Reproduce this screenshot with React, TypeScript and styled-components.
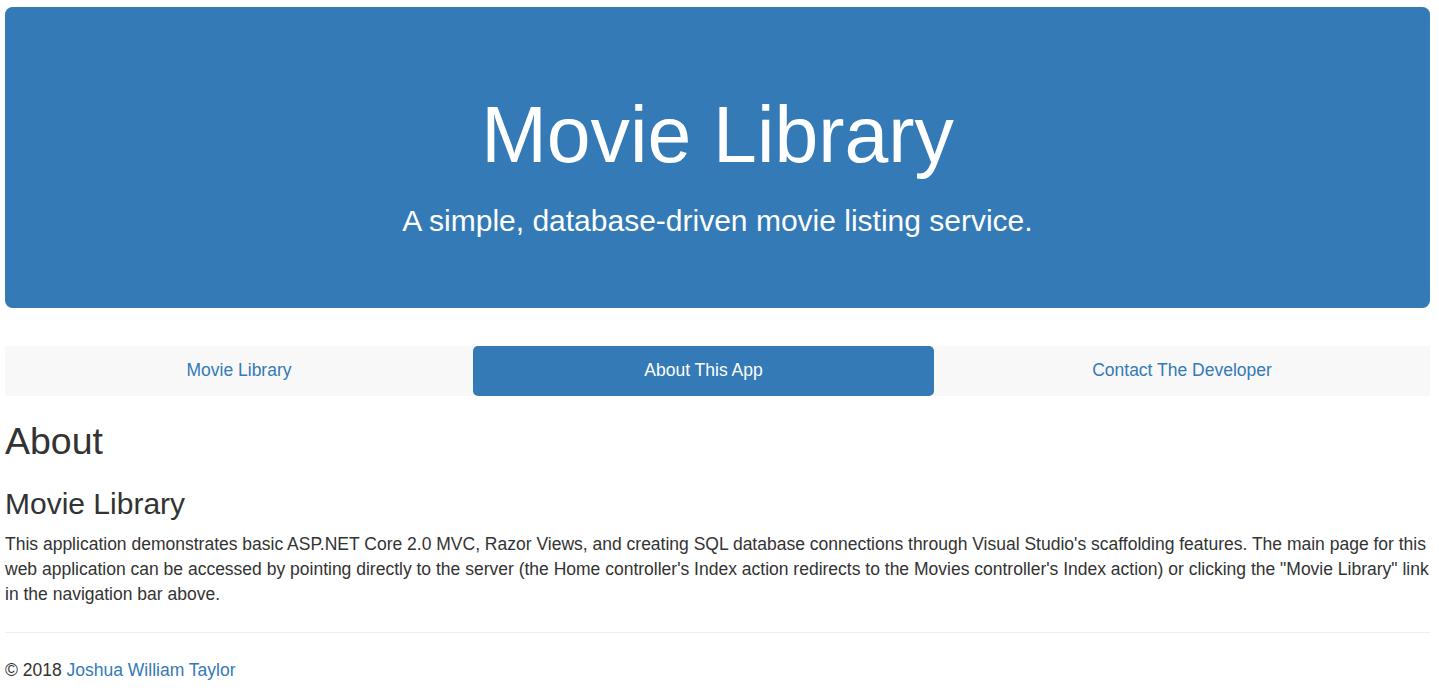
import React from 'react';
import styled, { createGlobalStyle } from 'styled-components';

const GlobalStyle = createGlobalStyle`
    * { box-sizing: border-box; }
    html, body { margin: 0; padding: 0; background: #fff; }
    body {
        font-family: "Liberation Sans", Arial, Helvetica, sans-serif;
        font-size: 17.5px;
        line-height: 25px;
        color: #333;
    }
`;

const Page = styled.div`
    padding: 7px 9px 0 5px;
`;

const Jumbotron = styled.header`
    background: #337ab7;
    color: #fff;
    border-radius: 7.5px;
    padding: 60px 75px;
    margin-bottom: 37.5px;
    text-align: center;
    h1 {
        font-size: 78.75px;
        line-height: 1.1;
        font-weight: 500;
        margin: 25px 0 12.5px;
    }
    p {
        font-size: 30px;
        line-height: 1.1;
        margin: 25px 0 11.5px;
    }
`;

const Pills = styled.ul`
    list-style: none;
    margin: 0;
    padding: 0;
    display: grid;
    grid-template-columns: 468fr 461fr 496fr;
    background: #f8f8f8;
`;

const Pill = styled.li<{ $active?: boolean }>`
    a {
        display: block;
        text-align: center;
        padding: 12.5px 18.75px;
        line-height: 25px;
        border-radius: 5px;
        text-decoration: none;
        color: ${p => (p.$active ? '#fff' : '#337ab7')};
        background: ${p => (p.$active ? '#337ab7' : 'transparent')};
    }
`;

const Content = styled.main`
    h2 {
        font-size: 37.5px;
        line-height: 1.1;
        font-weight: 500;
        margin: 25px 0 12.5px;
    }
    h3 {
        font-size: 30px;
        line-height: 1.1;
        font-weight: 500;
        margin: 25px 0 12.5px;
    }
    p {
        margin: 0 0 12.5px;
    }
`;

const Rule = styled.hr`
    border: 0;
    border-top: 1px solid #eee;
    margin: 25px 0;
`;

const Footer = styled.footer`
    p { margin: 0 0 12.5px; }
    a { color: #337ab7; text-decoration: none; }
`;

const links = ['Movie Library', 'About This App', 'Contact The Developer'];

export default function App() {
    return (
        <>
            <GlobalStyle />
            <Page>
                <Jumbotron>
                    <h1>Movie Library</h1>
                    <p>A simple, database-driven movie listing service.</p>
                </Jumbotron>
                <nav>
                    <Pills>
                        {links.map((label, i) => (
                            <Pill key={label} $active={i === 1}>
                                <a href="#">{label}</a>
                            </Pill>
                        ))}
                    </Pills>
                </nav>
                <Content>
                    <h2>About</h2>
                    <h3>Movie Library</h3>
                    <p>
                        This application demonstrates basic ASP.NET Core 2.0 MVC, Razor Views, and creating SQL database
                        connections through Visual Studio's scaffolding features. The main page for this web application can
                        be accessed by pointing directly to the server (the Home controller's Index action redirects to the
                        Movies controller's Index action) or clicking the "Movie Library" link in the navigation bar above.
                    </p>
                </Content>
                <Rule />
                <Footer>
                    <p>© 2018 <a href="#">Joshua William Taylor</a></p>
                </Footer>
            </Page>
        </>
    );
}
